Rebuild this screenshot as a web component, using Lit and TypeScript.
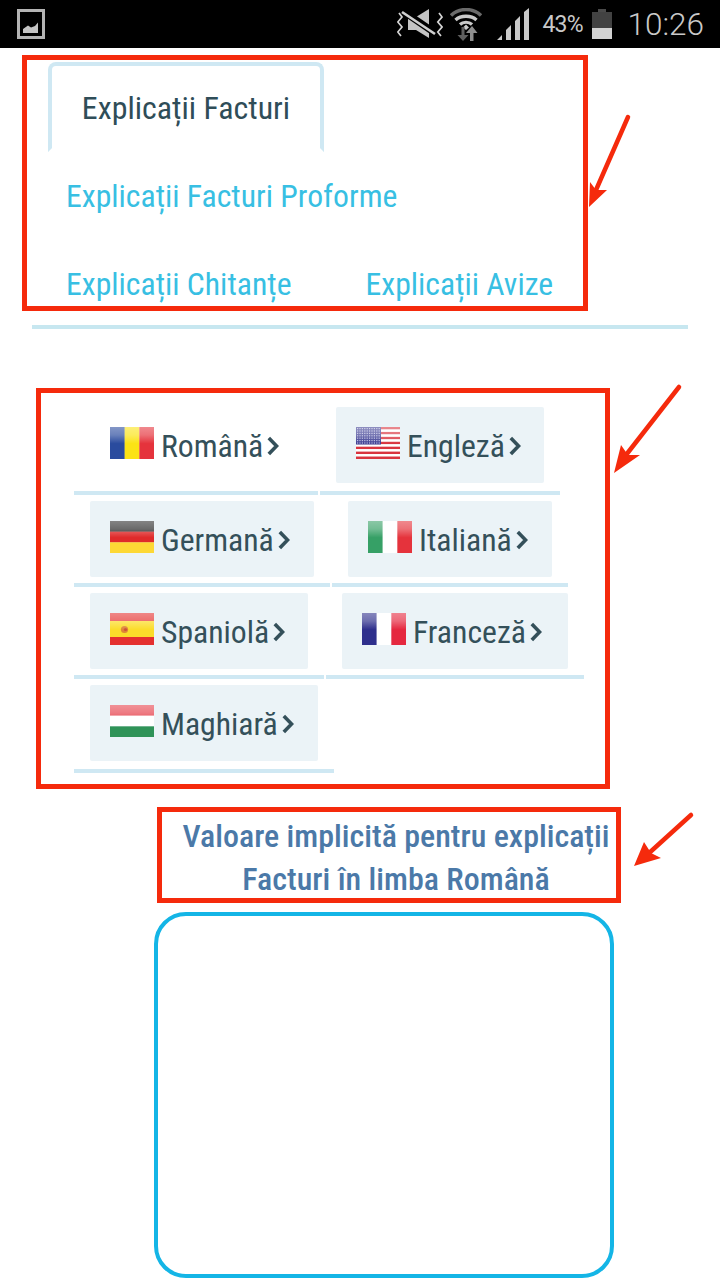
import { LitElement, html, css, svg } from "lit";
import { customElement } from "lit/decorators.js";

type Lang = { name: string; w: number; flag: string; active?: boolean };

const rows: { cls: string; items: Lang[] }[] = [
  { cls: "r1", items: [
    { name: "Română", w: 244, flag: "ro", active: true },
    { name: "Engleză", w: 240, flag: "us" },
  ]},
  { cls: "r2", items: [
    { name: "Germană", w: 256, flag: "de" },
    { name: "Italiană", w: 236, flag: "it" },
  ]},
  { cls: "r3", items: [
    { name: "Spaniolă", w: 250, flag: "es" },
    { name: "Franceză", w: 258, flag: "fr" },
  ]},
  { cls: "r4", items: [{ name: "Maghiară", w: 260, flag: "hu" }] },
];

const stripesH = (c: string[]) => c.map((col, i) =>
  svg`<rect x="0" y=${(i * 32) / c.length} width="44" height=${32 / c.length + 0.2} fill=${col}></rect>`);
const stripesV = (c: string[]) => c.map((col, i) =>
  svg`<rect x=${(i * 44) / c.length} y="0" width=${44 / c.length + 0.2} height="32" fill=${col}></rect>`);

function flagBody(f: string) {
  switch (f) {
    case "ro": return stripesV(["#2a4b9e", "#fbe315", "#e5333c"]);
    case "it": return stripesV(["#36a066", "#ffffff", "#e5333c"]);
    case "fr": return stripesV(["#2e2f8c", "#ffffff", "#e5283f"]);
    case "de": return stripesH(["#2b2b2b", "#df2a2a", "#fdd835"]);
    case "hu": return stripesH(["#e6414c", "#ffffff", "#2f9358"]);
    case "es": return svg`
      <rect width="44" height="32" fill="#e4302f"></rect>
      <rect y="8" width="44" height="16" fill="#fbdc2a"></rect>
      <circle cx="14.5" cy="16.5" r="3.6" fill="#d8743a" opacity=".85"></circle>
      <circle cx="15.5" cy="16.5" r="1.6" fill="#c9433a" opacity=".8"></circle>`;
    case "us": {
      const s = [];
      for (let i = 0; i < 13; i++) {
        s.push(svg`<rect y=${(i * 32) / 13} width="44" height=${32 / 13 + 0.1} fill=${i % 2 ? "#ffffff" : "#d9343f"}></rect>`);
      }
      const dots = [];
      for (let y = 1; y < 17; y += 2.4) for (let x = 1; x < 24; x += 2.4) {
        dots.push(svg`<rect x=${x} y=${y} width="1.2" height="1.2" fill="#b9b9e0"></rect>`);
      }
      return svg`${s}<rect width="25" height="17.5" fill="#3c3d92"></rect>${dots}`;
    }
  }
  return svg``;
}

const flag = (f: string) => html`<svg class="flag" viewBox="0 0 44 32" width="44" height="32" aria-hidden="true">
  <defs><linearGradient id="gl-${f}" x1="0" y1="0" x2="0" y2="1">
    <stop offset="0" stop-color="#fff" stop-opacity=".42"></stop>
    <stop offset=".25" stop-color="#fff" stop-opacity=".3"></stop>
    <stop offset=".52" stop-color="#fff" stop-opacity="0"></stop>
  </linearGradient></defs>
  ${flagBody(f)}
  <rect width="44" height="32" fill="url(#gl-${f})"></rect>
</svg>`;

const chev = html`<svg class="chev" viewBox="0 0 12 20" width="12" height="20" aria-hidden="true"><path d="M1.8 2 L9.6 10 L1.8 18" fill="none" stroke="#34505a" stroke-width="3.6"></path></svg>`;

@customElement("app-root")
export class AppRoot extends LitElement {
  static styles = css`
    :host { display: block; width: 720px; height: 1280px; position: relative; overflow: hidden; background: #fff;
      font-family: Roboto, "Liberation Sans", sans-serif; font-stretch: 85%; }
    .status { height: 48px; background: #000; display: flex; align-items: center; padding: 0 16px 0 17px; box-sizing: border-box; color: #c9c9c9; font-stretch: 100%; }
    .status .spacer { flex: 1; }
    .status svg { display: block; }
    .wifi { margin-left: 7px; }
    .sig { margin-left: 15px; }
    .pct { font-size: 23px; font-weight: 400; width: 44px; margin-left: 13px; letter-spacing: -0.8px; white-space: nowrap; }
    .bat { margin-left: 6px; margin-top: -1px; }
    .time { font-size: 31.5px; font-weight: 300; margin-left: 15px; white-space: nowrap; }

    .tabs { padding-top: 14px; }
    .tab { margin-left: 48px; width: 276px; height: 90px; box-sizing: border-box; padding-top: 2px; border: 4px solid #cfe8f3; border-bottom-color: transparent; border-radius: 8px 8px 0 0;
      display: flex; align-items: center; justify-content: center; font-size: 31.9px; color: #2f4d58; white-space: nowrap; }
    .linkrow { display: flex; padding: 25px 0 23px 66px; gap: 74px; font-size: 31.7px; line-height: 40px; color: #38bfe3; white-space: nowrap; }
    .linkrow.last { padding-bottom: 20px; }
    .divider { height: 4px; margin: 0 32px; background: #c7e7f0; }

    .langs { padding: 72px 0 0 74px; }
    .row { display: flex; gap: 2px; }
    .li { box-sizing: border-box; padding: 6px 16px; border-bottom: 4px solid #cfe8f3; }
    .r1 .li, .r4 .li { padding-bottom: 8px; }
    .btn { height: 76px; box-sizing: border-box; background: #ebf3f7; border-radius: 2px; padding-left: 20px; display: flex; align-items: center;
      font-size: 31.7px; color: #34505a; white-space: nowrap; }
    .btn.active { background: #fff; }
    .btn span { padding-top: 2px; }
    .flag { flex: none; margin: 0 7px 4px 0; }
    .chev { flex: none; margin-left: 4px; margin-top: 1px; }

    h2 { margin: 42px 0 0 160px; width: 472px; font-size: 32px; line-height: 43px; font-weight: 500; color: #4b79a8; text-align: center; white-space: nowrap; }
    textarea { display: block; box-sizing: border-box; width: 460px; height: 366px; margin: 11px 0 0 154px; border: 4px solid #14b5e6; border-radius: 32px; background: #fff; resize: none; outline: none; padding: 0; }

    .ann { position: absolute; left: 0; top: 0; pointer-events: none; }
  `;

  render() {
    return html`
      <div class="status">
        <svg width="28" height="30" viewBox="0 0 28 30" aria-hidden="true">
          <path fill-rule="evenodd" fill="#b4b4b4" d="M0 0h28v30H0z M3 3v24h22V3z"></path>
          <path fill="#c4c4c4" d="M6 24v-4l5-3.500 3 2 4-1.500 3-3.500v10.500z"></path>
        </svg>
        <span class="spacer"></span>
        <svg class="mute" width="46" height="30" viewBox="0 0 46 30" aria-hidden="true">
          <path d="M11 8h8L32 0v29L19 21h-8z" fill="#c4c4c4"></path>
          <path d="M6 2 L38 24" stroke="#000" stroke-width="7"></path>
          <path d="M5 3 L38 25" stroke="#cfcfcf" stroke-width="2.6"></path>
          <path d="M2 4 L5 8 L0.800 13 L5 18 L0.800 23 L4 27 M42 4 L45 8 L40.800 13 L45 18 L40.800 23 L44 27" fill="none" stroke="#d4d4d4" stroke-width="1.700"></path>
        </svg>
        <svg class="wifi" width="32" height="33" viewBox="0 0 32 33" aria-hidden="true">
          <path d="M1 7.500 C9 -0.500 23 -0.500 31 7.500" fill="none" stroke="#6a6a6a" stroke-width="3.400"></path>
          <path d="M5.500 12 C11 7 21 7 26.500 12" fill="none" stroke="#c9c9c9" stroke-width="3.400"></path>
          <path d="M10 16.500 C13 13.500 19 13.500 22 16.500" fill="none" stroke="#c9c9c9" stroke-width="3.200"></path>
          <path d="M13 19.500 L16 16.500 L19 19.500 L16 22 Z" fill="#c9c9c9"></path>
          <path d="M11.500 19v8h-4l5.500 6 5.500-6h-4v-8z" fill="#5e5e5e"></path>
          <path d="M20 33v-8h-4l6-7 5.500 7h-4v8z" fill="#8e8e8e"></path>
        </svg>
        <svg class="sig" width="32" height="32" viewBox="0 0 32 32" aria-hidden="true">
          <path fill="#c9c9c9" d="M0 32 L5 27 V32 Z M9 32 V22 L14 17 V32 Z M18 32 V13 L23 8 V32 Z M27 32 V4 L32 0 V32 Z"></path>
        </svg>
        <span class="pct">43%</span>
        <svg class="bat" width="20" height="30" viewBox="0 0 20 30" aria-hidden="true">
          <rect x="6" y="0" width="8" height="3" fill="#4a4a4a"></rect>
          <rect x="0" y="3" width="20" height="16" fill="#424242"></rect>
          <rect x="0" y="19" width="20" height="11" fill="#d2d2d2"></rect>
        </svg>
        <span class="time">10:26</span>
      </div>

      <div class="tabs">
        <div class="tab">Explicații Facturi</div>
        <div class="linkrow"><span>Explicații Facturi Proforme</span></div>
        <div class="linkrow last"><span>Explicații Chitanțe</span><span>Explicații Avize</span></div>
      </div>
      <div class="divider"></div>

      <div class="langs">
        ${rows.map((r) => html`<div class="row ${r.cls}">
          ${r.items.map((l) => html`<div class="li" style="width:${l.w}px">
            <div class="btn ${l.active ? "active" : ""}">${flag(l.flag)}<span>${l.name}</span>${chev}</div>
          </div>`)}
        </div>`)}
      </div>

      <h2>Valoare implicită pentru explicații<br />Facturi în limba Română</h2>
      <textarea aria-label="Valoare implicită"></textarea>

      <svg class="ann" width="720" height="1280" viewBox="0 0 720 1280" aria-hidden="true">
        <g fill="none" stroke="#f52a0c" stroke-width="5">
          <rect x="24.5" y="57.5" width="561" height="251"></rect>
          <rect x="38.5" y="390.5" width="569" height="396"></rect>
          <rect x="159.5" y="809.5" width="459" height="91"></rect>
        </g>
        <g fill="none" stroke="#f52a0c" stroke-width="4.5" stroke-linecap="round">
          <path d="M628 117 L596 190"></path>
          <path d="M679 387 L626 455"></path>
          <path d="M691 815 L648 854"></path>
        </g>
        <g fill="#f52a0c">
          <path d="M589 207 L590 182 L596 190 L607 190 Z"></path>
          <path d="M614 473 L621 445 L628 455 L640 455 Z"></path>
          <path d="M634 866 L644 842 L651 853 L661 858 Z"></path>
        </g>
      </svg>
    `;
  }
}
